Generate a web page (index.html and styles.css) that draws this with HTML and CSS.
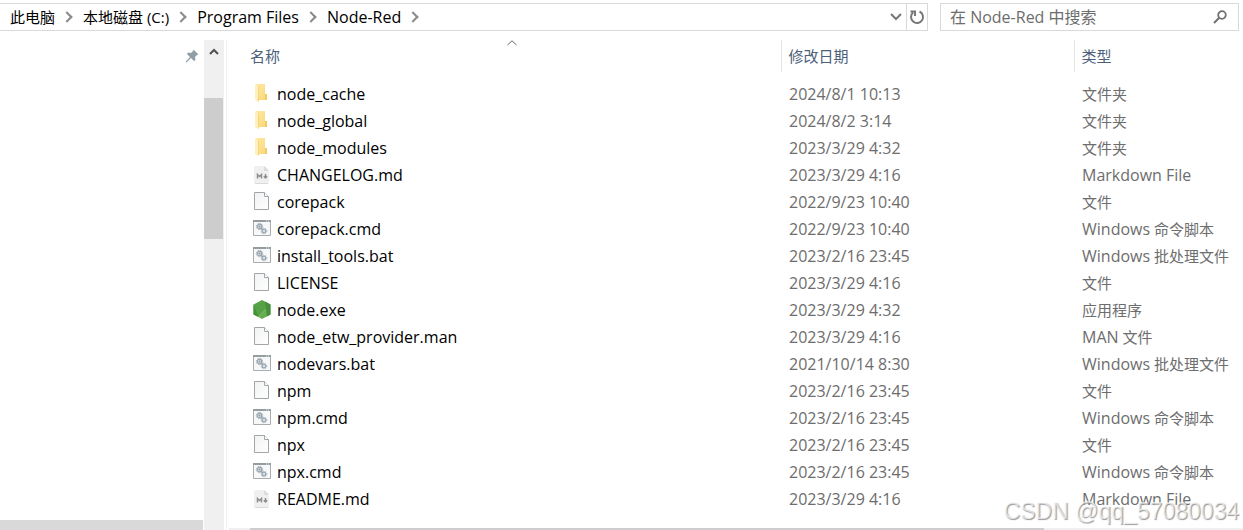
FILE: index.html
```html
<!DOCTYPE html>
<html lang="zh-CN">
<head>
<meta charset="utf-8">
<title>Node-Red</title>
<link rel="stylesheet" href="styles.css">
</head>
<body>
<svg class="sprite" aria-hidden="true">
  <defs>
    <linearGradient id="paper" x1="0" y1="0" x2="1" y2="1"><stop offset="0" stop-color="#f1f2f3"/><stop offset="1" stop-color="#fff"/></linearGradient>
    <linearGradient id="gold" x1="0" y1="0" x2="1" y2="1"><stop offset="0" stop-color="#ffe9a6"/><stop offset="1" stop-color="#f8d775"/></linearGradient>
    <symbol id="folder" viewBox="0 0 20 20">
      <path d="M3 0h9v10h2v6H3z" fill="url(#gold)"/>
      <path d="M12 10h2v6h-2z" fill="#f3cb62"/>
      <path d="M2 0l3 2v16l-3-2z" fill="#fff0be"/>
      <path d="M5 2v16l1-1V2.500z" fill="#f6d478"/>
    </symbol>
    <symbol id="markdown" viewBox="0 0 20 20">
      <path d="M3 1h9l4 4v12q0 2-2 2H3q-2 0-2-2V3q0-2 2-2z" fill="#f0f0f0"/>
      <path d="M11 1l5 5h-4q-1 0-1-1z" fill="#dcdcdc"/>
      <path d="M2 18.500h13" stroke="#dadada"/>
      <path d="M4.500 13.500V9.500l2 2 2-2v4M12.500 9v3.500M10.800 11.300l1.700 1.700 1.700-1.700" fill="none" stroke="#8e8e8e" stroke-width="1.500"/>
    </symbol>
    <symbol id="file" viewBox="0 0 20 20">
      <path d="M1.500.500h10l4 4v13h-14z" fill="url(#paper)" stroke="#a3a6a8"/>
      <path d="M11.500.500v4h4" fill="#fff" stroke="#a3a6a8"/>
    </symbol>
    <symbol id="script" viewBox="0 -1 20 20">
      <path d="M.500 1.500h17v14H.500z" fill="#f7f8f9" stroke="#a8adb0"/>
      <path d="M0 1h18" stroke="#969da1" stroke-width="2"/>
      <path d="M13 1h1M15 1h1" stroke="#e9eced"/>
      <circle cx="6.500" cy="6.500" r="2.300" fill="#dde4e8" stroke="#98a4ab" stroke-width="1.200"/>
      <circle cx="6.500" cy="6.500" r="3.200" fill="none" stroke="#a6b1b8" stroke-dasharray="1.300 1.200"/>
      <circle cx="11" cy="11" r="1.900" fill="#d7e0e6" stroke="#9aa8b1" stroke-width="1.200"/>
      <circle cx="11" cy="11" r="2.800" fill="none" stroke="#a9b5bc" stroke-dasharray="1.200 1.100"/>
      <circle cx="6.500" cy="6.500" r="1" fill="#8b979f"/>
      <path d="M8 8l2 2" stroke="#9aa8b1" stroke-width="1.500"/>
    </symbol>
    <symbol id="node" viewBox="0 0 20 20">
      <path d="M.500 4.500L9 0l8.500 4.500L5.500 17 .500 14.500z" fill="#55a345"/>
      <path d="M.500 4.500l5 12.500-5-2.500z" fill="#46903c"/>
      <path d="M17.500 4.500v10L9 19l-3.500-2z" fill="#66ad50"/>
      <path d="M12 1.600l5.500 2.900v10L14 16.400z" fill="#478f3c"/>
    </symbol>
  </defs>
</svg>

<header class="toolbar">
  <nav class="address" aria-label="地址">
    <ol class="crumbs">
      <li><a href="#">此电脑</a></li>
      <li><a href="#">本地磁盘 (C:)</a></li>
      <li><a href="#" class="latin">Program Files</a></li>
      <li><a href="#" class="latin">Node-Red</a></li>
    </ol>
    <button class="history" aria-label="历史记录"><svg width="12" height="8" viewBox="0 0 12 8"><path d="M1 1l5 5 5-5" fill="none" stroke="#777" stroke-width="2"/></svg></button>
    <button class="refresh" aria-label="刷新"><svg width="16" height="16" viewBox="0 0 16 16"><path d="M10.500 2.500A6 6 0 1 1 4 3.500M1.500 2.500H6v4.500" fill="none" stroke="#777" stroke-width="2"/></svg></button>
  </nav>
  <form class="search" role="search">
    <input type="search" class="search-box" aria-label="搜索" placeholder="在 Node-Red 中搜索">
    <button class="search-go" type="button" aria-label="搜索"><svg width="14" height="14" viewBox="0 0 14 14"><circle cx="9" cy="5" r="3.800" fill="none" stroke="#707070" stroke-width="1.800"/><path d="M6.500 7.500l-5.500 5.500" stroke="#707070" stroke-width="2"/></svg></button>
  </form>
</header>

<div class="panes">
  <aside class="tree">
    <svg class="pin" width="14" height="14" viewBox="0 0 14 14"><path d="M8.500.500l5 5-1.500.500-2 2 .500 3-1.500 1-3-3L1.500 13.500.500 13 5 8 2 5l1-1.500 3 .500 2-2z" fill="#929ea6"/></svg>
    <div class="tree-scroll"></div>
  </aside>
  <div class="vscroll">
    <button class="up" aria-label="向上滚动"><svg width="10" height="7" viewBox="0 0 10 7"><path d="M1 6l4-4 4 4" fill="none" stroke="#505050" stroke-width="2"/></svg></button>
    <div class="vthumb"></div>
  </div>
  <main class="list">
    <table class="files">
      <colgroup><col class="col-name"><col class="col-date"><col></colgroup>
      <thead>
        <tr><th class="sorted">名称<svg class="sort" width="10" height="6" viewBox="0 0 10 6"><path d="M.500 5L5 .800 9.500 5" fill="none" stroke="#666"/></svg></th><th>修改日期</th><th>类型</th></tr>
      </thead>
      <tbody>
        <tr><td><span class="name"><svg class="icon"><use href="#folder"/></svg>node_cache</span></td><td class="latin">2024/8/1 10:13</td><td>文件夹</td></tr>
        <tr><td><span class="name"><svg class="icon"><use href="#folder"/></svg>node_global</span></td><td class="latin">2024/8/2 3:14</td><td>文件夹</td></tr>
        <tr><td><span class="name"><svg class="icon"><use href="#folder"/></svg>node_modules</span></td><td class="latin">2023/3/29 4:32</td><td>文件夹</td></tr>
        <tr><td><span class="name"><svg class="icon"><use href="#markdown"/></svg>CHANGELOG.md</span></td><td class="latin">2023/3/29 4:16</td><td class="latin">Markdown File</td></tr>
        <tr><td><span class="name"><svg class="icon"><use href="#file"/></svg>corepack</span></td><td class="latin">2022/9/23 10:40</td><td>文件</td></tr>
        <tr><td><span class="name"><svg class="icon"><use href="#script"/></svg>corepack.cmd</span></td><td class="latin">2022/9/23 10:40</td><td><span class="latin">Windows</span> 命令脚本</td></tr>
        <tr><td><span class="name"><svg class="icon"><use href="#script"/></svg>install_tools.bat</span></td><td class="latin">2023/2/16 23:45</td><td><span class="latin">Windows</span> 批处理文件</td></tr>
        <tr><td><span class="name"><svg class="icon"><use href="#file"/></svg>LICENSE</span></td><td class="latin">2023/3/29 4:16</td><td>文件</td></tr>
        <tr><td><span class="name"><svg class="icon"><use href="#node"/></svg>node.exe</span></td><td class="latin">2023/3/29 4:32</td><td>应用程序</td></tr>
        <tr><td><span class="name"><svg class="icon"><use href="#file"/></svg>node_etw_provider.man</span></td><td class="latin">2023/3/29 4:16</td><td><span class="latin">MAN</span> 文件</td></tr>
        <tr><td><span class="name"><svg class="icon"><use href="#script"/></svg>nodevars.bat</span></td><td class="latin">2021/10/14 8:30</td><td><span class="latin">Windows</span> 批处理文件</td></tr>
        <tr><td><span class="name"><svg class="icon"><use href="#file"/></svg>npm</span></td><td class="latin">2023/2/16 23:45</td><td>文件</td></tr>
        <tr><td><span class="name"><svg class="icon"><use href="#script"/></svg>npm.cmd</span></td><td class="latin">2023/2/16 23:45</td><td><span class="latin">Windows</span> 命令脚本</td></tr>
        <tr><td><span class="name"><svg class="icon"><use href="#file"/></svg>npx</span></td><td class="latin">2023/2/16 23:45</td><td>文件</td></tr>
        <tr><td><span class="name"><svg class="icon"><use href="#script"/></svg>npx.cmd</span></td><td class="latin">2023/2/16 23:45</td><td><span class="latin">Windows</span> 命令脚本</td></tr>
        <tr><td><span class="name"><svg class="icon"><use href="#markdown"/></svg>README.md</span></td><td class="latin">2023/3/29 4:16</td><td class="latin">Markdown File</td></tr>
      </tbody>
    </table>
    <div class="hscroll"><div class="hthumb"></div></div>
  </main>
</div>
<div class="watermark">CSDN @qq_57080034</div>
</body>
</html>
```
FILE: styles.css
```css
* { box-sizing: border-box; }

body {
  margin: 0;
  min-height: 100vh;
  display: flex;
  flex-direction: column;
  position: relative;
  background: #fff;
  color: #000;
  font: 15px/20px "Open Sans", "Noto Sans CJK SC", sans-serif;
}

button {
  display: flex;
  align-items: center;
  justify-content: center;
  padding: 0;
  border: 0;
  background: none;
}

.sprite { position: absolute; width: 0; height: 0; }

/* Latin runs are set one step larger than the Chinese text beside them */
.latin, .name { font-size: 16px; }

.toolbar {
  display: flex;
  gap: 12px;
  padding: 3px 4px 9px 0;
}

.address {
  flex: 1;
  display: flex;
  height: 28px;
  border: 1px solid #d9d9d9;
  border-left: 0;
}

.crumbs {
  flex: 1;
  display: flex;
  align-items: center;
  margin: 0;
  padding: 0 0 0 10px;
  list-style: none;
}

.crumbs li { display: flex; align-items: center; }
.crumbs a { color: inherit; text-decoration: none; }

.crumbs li::after {
  content: "";
  width: 6px;
  height: 6px;
  margin: 0 12px 0 8px;
  border: solid #8a8a8a;
  border-width: 2px 2px 0 0;
  transform: rotate(45deg);
}

.history { width: 20px; }
.refresh { width: 21px; border-left: 1px solid #d9d9d9; }

.search {
  display: flex;
  width: 299px;
  height: 28px;
  border: 1px solid #d9d9d9;
}

.search-box {
  flex: 1;
  min-width: 0;
  padding: 0 0 0 9px;
  border: 0;
  outline: 0;
  background: none;
  font: inherit;
  font-size: 16px;
  appearance: none;
}

.search-box::placeholder { color: #6d6d6d; opacity: 1; }
.search-go { width: 36px; }

.panes { flex: 1; display: flex; }

.tree {
  width: 203px;
  display: flex;
  flex-direction: column;
  justify-content: space-between;
}

.pin { align-self: flex-end; margin: 9px 4px 0 0; }
.tree-scroll { height: 10px; background: #d9d9d9; }

.vscroll {
  width: 20px;
  margin-left: 1px;
  background: #f0f0f0;
}

.up { width: 19px; height: 22px; }
.vthumb { width: 19px; height: 141px; margin-top: 36px; background: #cdcdcd; }

.list {
  flex: 1;
  display: flex;
  flex-direction: column;
  justify-content: space-between;
  margin-left: 2px;
  padding-left: 2px;
  border-left: 1px solid #f2f2f2;
}

.files {
  width: 100%;
  table-layout: fixed;
  border-collapse: collapse;
}

.col-name { width: 552px; }
.col-date { width: 293px; }

th {
  height: 32px;
  padding: 0 0 0 7px;
  border-left: 1px solid #e5e5e5;
  color: #4c607a;
  font-weight: 400;
  text-align: left;
}

th.sorted { position: relative; padding-left: 21px; border-left: 0; }
.sort { position: absolute; top: 0; left: 50%; margin-left: 2px; }

tbody::before { content: ""; display: block; height: 8px; }

td {
  height: 27px;
  padding: 0 0 0 8px;
  color: #6d6d6d;
  white-space: nowrap;
}

td:first-child { padding-left: 24px; color: #000; }
.name { display: flex; align-items: center; gap: 4px; }
.icon { width: 20px; height: 20px; }

.hscroll {
  height: 2px;
  padding-left: 21px;
  background: #f0f0f0;
}

.hthumb { width: 80%; height: 2px; background: #cdcdcd; }

.watermark {
  position: absolute;
  right: 4px;
  bottom: 3px;
  color: #ffffffa0;
  font: 23px/32px "Liberation Sans", sans-serif;
  text-shadow: 1px 1px 1px #999;
}
```
